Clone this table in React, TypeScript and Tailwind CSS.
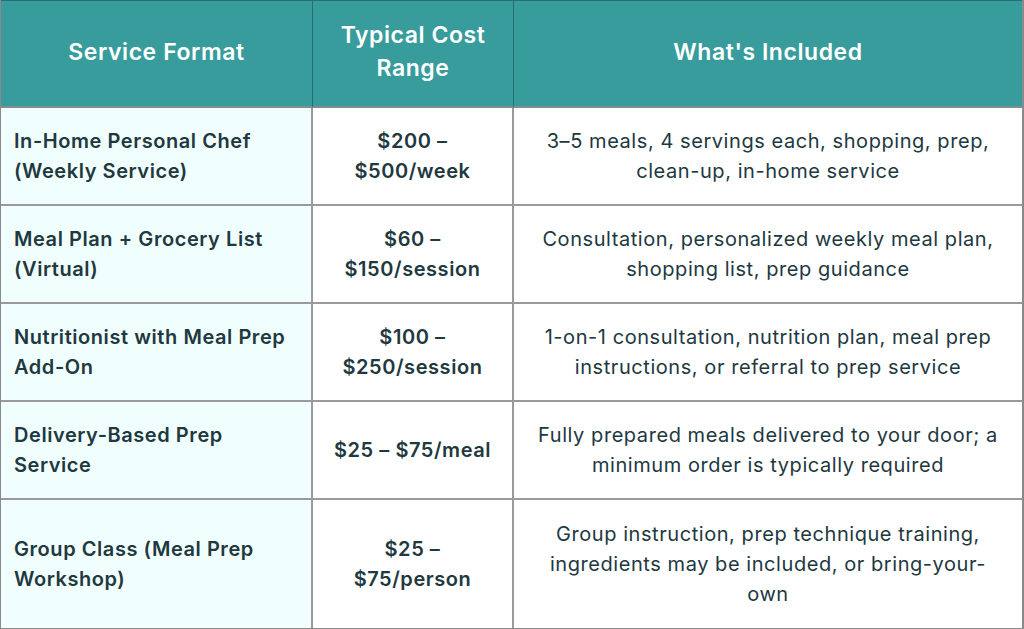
import React from "react";

const rows: { a: string[]; b: string[]; c: string[]; h: string }[] = [
  { a: ["In-Home Personal Chef", "(Weekly Service)"], b: ["$200 –", "$500/week"], c: ["3–5 meals, 4 servings each, shopping, prep,", "clean-up, in-home service"], h: "h-[98px]" },
  { a: ["Meal Plan + Grocery List", "(Virtual)"], b: ["$60 –", "$150/session"], c: ["Consultation, personalized weekly meal plan,", "shopping list, prep guidance"], h: "h-[98px]" },
  { a: ["Nutritionist with Meal Prep", "Add-On"], b: ["$100 –", "$250/session"], c: ["1-on-1 consultation, nutrition plan, meal prep", "instructions, or referral to prep service"], h: "h-[98px]" },
  { a: ["Delivery-Based Prep", "Service"], b: ["$25 – $75/meal"], c: ["Fully prepared meals delivered to your door; a", "minimum order is typically required"], h: "h-[98px]" },
  { a: ["Group Class (Meal Prep", "Workshop)"], b: ["$25 –", "$75/person"], c: ["Group instruction, prep technique training,", "ingredients may be included, or bring-your-", "own"], h: "h-[128px]" },
];

function Lines({ lines }: { lines: string[] }) {
  return (
    <>
      {lines.map((l, i) => (
        <span key={i} className="block whitespace-nowrap">{l}</span>
      ))}
    </>
  );
}

export default function App() {
  return (
    <div className="w-[1024px] h-[629px] bg-white overflow-hidden" style={{ fontFamily: "Inter, 'Noto Sans', sans-serif" }}>
      <div className="grid grid-cols-[312px_201px_1fr] border-l border-l-[#8a8a8a] border-r-2 border-r-[#8a8a8a] border-b-2 border-b-[#8a8a8a] text-[#21383f] tracking-[0.035em]">
        <div className="h-[108px] bg-[#379c9b] text-white text-[23px] font-semibold leading-[33px] flex items-center justify-center text-center border-r border-r-[#25706e] border-b-2 border-b-[#7f8f8e] border-t border-t-[#25706e] pb-[3px]">
          <Lines lines={["Service Format"]} />
        </div>
        <div className="h-[108px] bg-[#379c9b] text-white text-[23px] font-semibold leading-[33px] flex flex-col items-center justify-center text-center border-r border-r-[#25706e] border-b-2 border-b-[#7f8f8e] border-t border-t-[#25706e] pb-[3px]">
          <Lines lines={["Typical Cost", "Range"]} />
        </div>
        <div className="h-[108px] bg-[#379c9b] text-white text-[23px] font-semibold leading-[33px] flex items-center justify-center text-center border-b-2 border-b-[#7f8f8e] border-t border-t-[#25706e] pb-[3px]">
          <Lines lines={["What's Included"]} />
        </div>
        {rows.map((r, i) => (
          <React.Fragment key={i}>
            <div className={`${r.h} bg-[#f0fffd] text-[20px] font-semibold leading-[30px] flex flex-col justify-center pl-[13px] border-r-2 border-r-[#9a9a9a] ${i < rows.length - 1 ? "border-b-2 border-b-[#9a9a9a]" : ""}`}>
              <Lines lines={r.a} />
            </div>
            <div className={`${r.h} text-[20px] font-semibold leading-[30px] flex flex-col items-center justify-center text-center border-r-2 border-r-[#9a9a9a] ${i < rows.length - 1 ? "border-b-2 border-b-[#9a9a9a]" : ""}`}>
              <Lines lines={r.b} />
            </div>
            <div className={`${r.h} text-[20px] font-normal leading-[30px] flex flex-col items-center justify-center text-center ${i < rows.length - 1 ? "border-b-2 border-b-[#9a9a9a]" : ""}`}>
              <Lines lines={r.c} />
            </div>
          </React.Fragment>
        ))}
      </div>
    </div>
  );
}
